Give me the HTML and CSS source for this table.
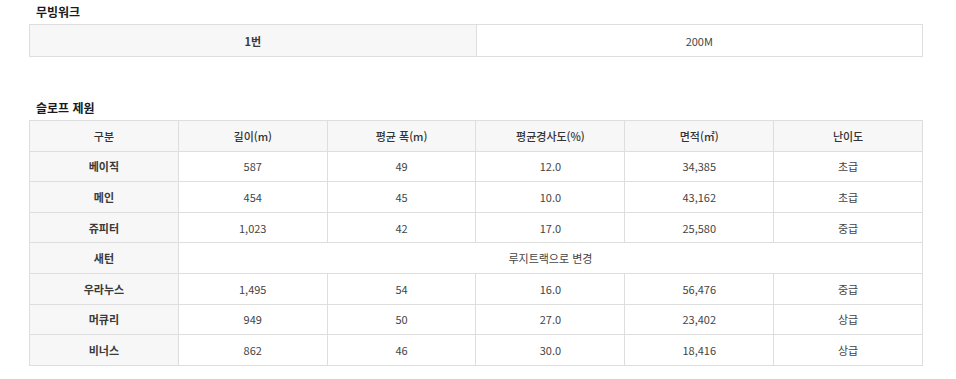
FILE: index.html
```html
<!DOCTYPE html>
<html lang="ko">
<head>
<meta charset="utf-8">
<link rel="stylesheet" href="styles.css">
</head>
<body>
<div class="page">
  <h3 class="title t1">무빙워크</h3>
  <table class="spec walk">
    <tr><th>1번</th><td>200M</td></tr>
  </table>

  <h3 class="title t2">슬로프 제원</h3>
  <table class="spec slope">
    <tr class="head"><th>구분</th><th>길이(m)</th><th>평균 폭(m)</th><th>평균경사도(%)</th><th>면적(㎡)</th><th>난이도</th></tr>
    <tr><th>베이직</th><td>587</td><td>49</td><td>12.0</td><td>34,385</td><td>초급</td></tr>
    <tr><th>메인</th><td>454</td><td>45</td><td>10.0</td><td>43,162</td><td>초급</td></tr>
    <tr><th>쥬피터</th><td>1,023</td><td>42</td><td>17.0</td><td>25,580</td><td>중급</td></tr>
    <tr><th>새턴</th><td colspan="5">루지트랙으로 변경</td></tr>
    <tr><th>우라누스</th><td>1,495</td><td>54</td><td>16.0</td><td>56,476</td><td>중급</td></tr>
    <tr><th>머큐리</th><td>949</td><td>50</td><td>27.0</td><td>23,402</td><td>상급</td></tr>
    <tr><th>비너스</th><td>862</td><td>46</td><td>30.0</td><td>18,416</td><td>상급</td></tr>
  </table>
</div>
</body>
</html>
```
FILE: styles.css
```css
html, body {
  margin: 0;
  padding: 0;
  background: #fff;
}
.page {
  padding: 4px 33px 0 29px;
  font-family: "Noto Sans CJK KR", "Noto Sans", sans-serif;
  color: #444;
}
.title {
  margin: 0 0 0 7px;
  font-size: 12px;
  line-height: 16px;
  font-weight: 700;
  color: #1a1a1a;
}
.t1 { margin-bottom: 4px; }
.t2 { margin-top: 43px; margin-bottom: 4px; }
.spec {
  width: 100%;
  border-collapse: collapse;
  table-layout: fixed;
  font-size: 11px;
}
.spec th, .spec td {
  border: 1px solid #dedede;
  padding: 0;
  text-align: center;
  vertical-align: middle;
  line-height: 14px;
}
.spec th {
  background: #f7f7f7;
  color: #3a3a3a;
  font-weight: 700;
}
.spec td {
  color: #444;
  font-weight: 400;
}
.walk tr { height: 32px; }
.slope tr { height: 30.6px; }
.slope .head th { font-weight: 500; color: #333; }
```
